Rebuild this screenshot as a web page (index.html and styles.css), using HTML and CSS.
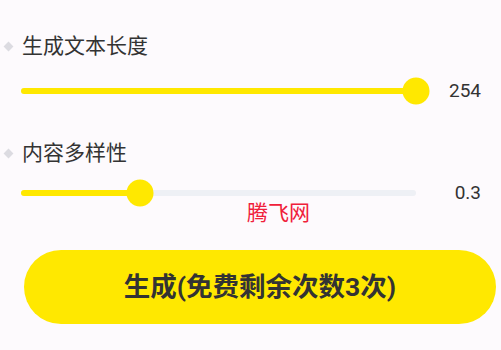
FILE: index.html
```html
<!DOCTYPE html>
<html>
<head>
	<meta charset="utf-8">
	<title>生成设置</title>
	<link rel="stylesheet" href="styles.css">
</head>
<body>
	<div class="page">
		<!--文本长度-->
		<div class="title"><span class="dot"></span>生成文本长度</div>
		<div class="slider-row">
			<div class="track">
				<div class="fill" style="width: 100%"></div>
				<div class="thumb" style="left: 100%"></div>
			</div>
			<div class="value">254</div>
		</div>
		<!--多样性-->
		<div class="title title-second"><span class="dot"></span>内容多样性</div>
		<div class="slider-row slider-second">
			<div class="track">
				<div class="fill" style="width: 30%"></div>
				<div class="thumb" style="left: 30%"></div>
			</div>
			<div class="value">0.3</div>
		</div>
		<div class="mark">腾飞网</div>
		<div class="btn">生成(免费剩余次数3次)</div>
	</div>
</body>
</html>
```

FILE: styles.css
```css
* {
	margin: 0;
	padding: 0;
	box-sizing: border-box;
}

body {
	background-color: #fdfafd;
	font-family: Roboto, "Noto Sans CJK SC", sans-serif;
	color: #333;
}

.page {
	position: relative;
	width: 501px;
	height: 350px;
	padding-top: 31px;
}

.title {
	display: flex;
	align-items: center;
	height: 30px;
	line-height: 30px;
	font-size: 21px;
	padding-left: 5px;
}

.title-second {
	margin-top: 32px;
}

.dot {
	width: 7px;
	height: 7px;
	margin-right: 10px;
	background-color: #dcdbe1;
	transform: rotate(45deg);
}

.slider-row {
	display: flex;
	align-items: center;
	height: 30px;
	margin-top: 15px;
	padding-left: 21px;
	padding-right: 20px;
}

.slider-second {
	margin-top: 10px;
}

.track {
	position: relative;
	width: 395px;
	height: 6px;
	border-radius: 3px;
	background-color: #eef0f5;
}

.fill {
	height: 6px;
	border-radius: 3px;
	background-color: #ffe800;
}

.thumb {
	position: absolute;
	top: 50%;
	width: 27px;
	height: 27px;
	border-radius: 50%;
	background-color: #ffe800;
	transform: translate(-50%, -50%);
}

.value {
	flex: 1;
	text-align: right;
	font-size: 19px;
	line-height: 30px;
}

.mark {
	position: absolute;
	left: 247px;
	top: 198px;
	font-size: 21px;
	line-height: 30px;
	color: #f0203a;
}

.btn {
	width: 472px;
	height: 74px;
	margin-top: 42px;
	margin-left: 24px;
	border-radius: 37px;
	background-color: #ffe800;
	text-align: center;
	line-height: 74px;
	font-size: 26.5px;
	font-weight: bold;
	color: #333;
}
```
